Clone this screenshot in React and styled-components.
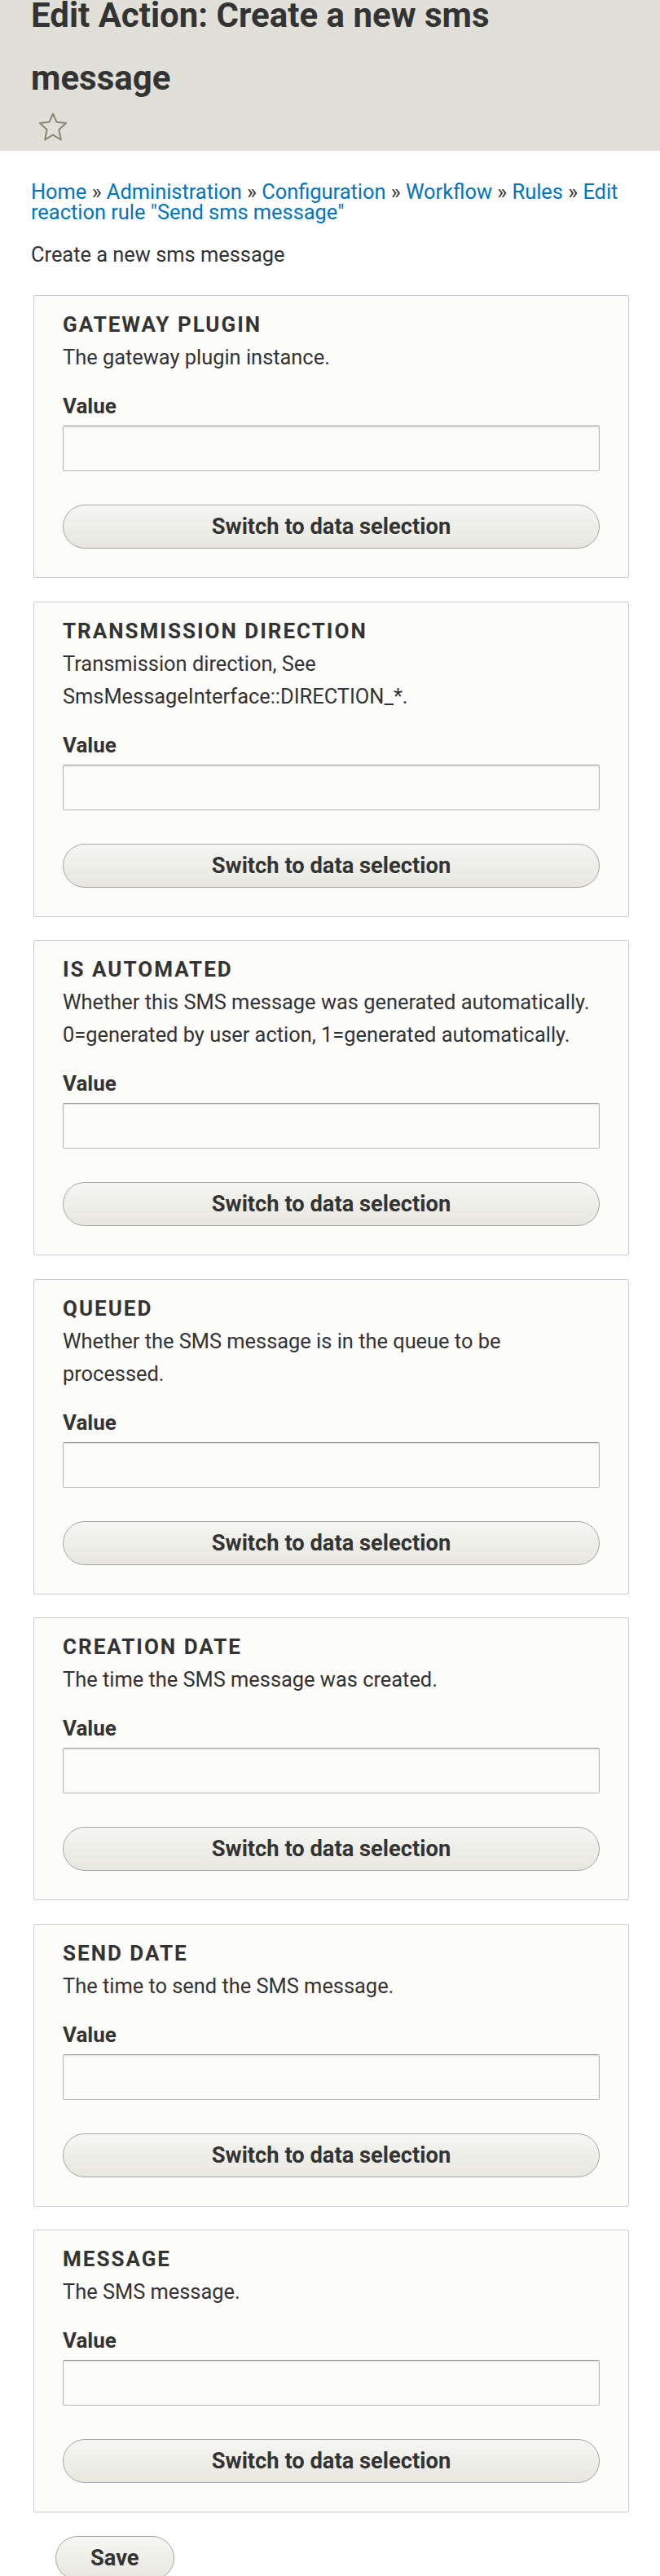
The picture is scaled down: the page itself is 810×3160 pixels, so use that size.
import styled, { createGlobalStyle } from 'styled-components';

const GlobalStyle = createGlobalStyle`
  body {
    margin: 0;
    background: #ffffff;
    color: #333333;
    font-family: Roboto, "Liberation Sans", Arial, sans-serif;
  }
  * { box-sizing: border-box; }
`;

const Header = styled.header`
  background: #e0e0d8;
  display: flex;
  flex-direction: column;
  align-items: flex-start;
  padding: 0 38px 11px;
`;

const Title = styled.h1`
  margin: -20px 0 0;
  font-size: 42px;
  line-height: 77px;
  font-weight: 700;
  color: #333333;
`;

const StarLink = styled.a`
  display: block;
  width: 36px;
  height: 36px;
  margin: 4px 0 0 9px;
`;

const Main = styled.main`
  padding: 38px 38px 0;
`;

const Breadcrumb = styled.nav`
  font-size: 25.4px;
  line-height: 25px;
  color: #333333;
`;

const Crumb = styled.a`
  color: #0074bd;
  text-decoration: none;
`;

const PageDesc = styled.p`
  margin: 19px 0 30px;
  font-size: 25.4px;
  line-height: 40px;
`;

const Card = styled.fieldset`
  margin: 0 0 28.5px 3px;
  padding: 15px 35px 35px;
  border: 1px solid #cccccc;
  border-radius: 2px;
  background: #fcfcfa;
  min-width: 0;
`;

const Legend = styled.div`
  font-size: 26px;
  line-height: 40px;
  font-weight: 700;
  text-transform: uppercase;
  letter-spacing: 2px;
  color: #333333;
`;

const Description = styled.div`
  font-size: 25.4px;
  line-height: 40px;
  color: #333333;
`;

const Label = styled.label`
  display: block;
  margin-top: 20px;
  font-size: 26px;
  line-height: 40px;
  font-weight: 700;
`;

const TextInput = styled.input`
  display: block;
  width: 100%;
  height: 56px;
  margin-top: 4px;
  border: 1px solid #b8b8b8;
  border-top-color: #999999;
  border-radius: 2px;
  background: #fcfcfa;
  box-shadow: inset 0 1px 2px rgba(0, 0, 0, 0.125);
  font: inherit;
  font-size: 26px;
  padding: 0 10px;
`;

const Button = styled.button`
  display: block;
  width: ${(p) => (p.$wide ? '100%' : 'auto')};
  height: 54px;
  margin-top: ${(p) => (p.$wide ? '41px' : '0')};
  padding: 0 42px;
  border: 1px solid #a6a6a6;
  border-radius: 40px;
  background: linear-gradient(to bottom, #f6f6f3, #e7e7df);
  color: #333333;
  font-family: Roboto, "Liberation Sans", Arial, sans-serif;
  font-size: 27.3px;
  font-weight: 700;
  text-shadow: 0 1px rgba(255, 255, 255, 0.6);
  cursor: pointer;
`;

const Actions = styled.div`
  padding: 0 0 0 30px;
`;

const crumbs = ['Home', 'Administration', 'Configuration', 'Workflow', 'Rules'];

const fields = [
  { name: 'Gateway plugin', desc: 'The gateway plugin instance.' },
  { name: 'Transmission direction', desc: 'Transmission direction, See SmsMessageInterface::DIRECTION_*.' },
  {
    name: 'Is automated',
    desc: 'Whether this SMS message was generated automatically. 0=generated by user action, 1=generated automatically.',
  },
  { name: 'Queued', desc: 'Whether the SMS message is in the queue to be processed.' },
  { name: 'Creation date', desc: 'The time the SMS message was created.' },
  { name: 'Send date', desc: 'The time to send the SMS message.' },
  { name: 'Message', desc: 'The SMS message.' },
];

function Star() {
  return (
    <svg width="36" height="36" viewBox="0 0 36 36">
      <polygon
        points="18,1.5 22.6,11.8 34,13 25.4,21 27.8,33.5 18,27.4 8.2,33.5 10.6,21 2,13 13.4,11.8"
        fill="none"
        stroke="#898773"
        strokeWidth="2"
        strokeLinejoin="round"
      />
    </svg>
  );
}

function FieldCard({ name, desc, index }) {
  const id = `field-${index}`;
  return (
    <Card>
      <Legend>{name}</Legend>
      <Description>{desc}</Description>
      <Label htmlFor={id}>Value</Label>
      <TextInput id={id} type="text" />
      <Button $wide type="button">Switch to data selection</Button>
    </Card>
  );
}

export default function App() {
  return (
    <>
      <GlobalStyle />
      <Header>
        <Title>Edit Action: Create a new sms message</Title>
        <StarLink href="#" title="Add to Default shortcuts">
          <Star />
        </StarLink>
      </Header>
      <Main>
        <Breadcrumb>
          {crumbs.map((c) => (
            <span key={c}>
              <Crumb href="#">{c}</Crumb>
              {' » '}
            </span>
          ))}
          <Crumb href="#">Edit reaction rule "Send sms message"</Crumb>
        </Breadcrumb>
        <PageDesc>Create a new sms message</PageDesc>
        <form>
          {fields.map((f, i) => (
            <FieldCard key={f.name} name={f.name} desc={f.desc} index={i} />
          ))}
          <Actions>
            <Button type="submit">Save</Button>
          </Actions>
        </form>
      </Main>
    </>
  );
}
